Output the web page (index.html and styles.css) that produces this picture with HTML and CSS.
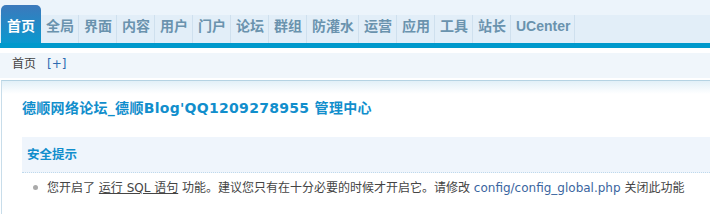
FILE: index.html
```html
<!DOCTYPE html>
<html lang="zh-CN">
<head>
<meta charset="utf-8">
<title>管理中心</title>
<link rel="stylesheet" href="styles.css">
</head>
<body>
<div class="header">
  <ul class="nav">
    <li class="on">首页</li>
    <li>全局</li>
    <li>界面</li>
    <li>内容</li>
    <li>用户</li>
    <li>门户</li>
    <li>论坛</li>
    <li>群组</li>
    <li>防灌水</li>
    <li>运营</li>
    <li>应用</li>
    <li>工具</li>
    <li>站长</li>
    <li>UCenter</li>
  </ul>
</div>
<div class="subnav"><span class="crumb">首页</span><a class="add">[+]</a></div>
<div class="main">
  <h3 class="title">德顺网络论坛_德顺Blog'QQ1209278955 管理中心</h3>
  <div class="box-head">安全提示</div>
  <ul class="tips">
    <li>您开启了 <a class="u">运行 SQL 语句</a> 功能。建议您只有在十分必要的时候才开启它。请修改 <span class="path">config/config_global.php</span> 关闭此功能</li>
  </ul>
</div>
</body>
</html>
```
FILE: styles.css
```css
html, body {
  margin: 0;
  padding: 0;
  background: #fff;
}
body {
  font-family: "DejaVu Sans", "Noto Sans CJK SC", sans-serif;
  font-size: 12px;
  color: #444;
}
.header {
  background: #ECF4FB;
  padding-top: 5px;
  border-bottom: 5px solid #0099CC;
}
.nav {
  list-style: none;
  margin: 0;
  padding: 0 0 0 1px;
  display: flex;
  align-items: flex-end;
  height: 38px;
  background: linear-gradient(#ECF4FB 0, #ECF4FB 10px, #E2EEF8 10px);
}
.nav li {
  box-sizing: border-box;
  height: 28px;
  padding: 0 4px 0 5px;
  border-right: 1px solid #CFE0EE;
  font: bold 14px/22px "Liberation Sans", "Noto Sans CJK SC", sans-serif;
  color: #6A93AE;
  white-space: nowrap;
}
.nav li.on {
  height: 38px;
  padding: 10px 6px 0;
  border-right: 0;
  border-radius: 5px 5px 0 0;
  background: linear-gradient(#3C79BC, #0A98CF);
  color: #fff;
}
.subnav {
  margin: 5px 0 2px;
  height: 25px;
  line-height: 23px;
  background: #F0F6FB;
  padding-left: 12px;
}
.crumb {
  color: #444;
}
.add {
  margin-left: 11px;
  color: #2D6BB1;
  font-family: "DejaVu Sans", sans-serif;
}
.main {
  margin-left: 1px;
  border-top: 1px solid #B5D3E3;
  border-left: 1px solid #C8DDEA;
  background: linear-gradient(#E2F0F8, #fff 13px) no-repeat;
  padding: 17px 0 16px 20px;
}
.title {
  margin: 0;
  font: bold 14px/20px "DejaVu Sans", "Noto Sans CJK SC", sans-serif;
  letter-spacing: 0.3px;
  color: #118ECC;
  white-space: nowrap;
}
.box-head {
  margin-top: 19px;
  height: 35px;
  line-height: 35px;
  padding-left: 5px;
  background: #EFF5FC;
  border-bottom: 1px dotted #BFD9EC;
  font-weight: bold;
  font-size: 12.5px;
  color: #118ECC;
}
.tips {
  list-style: none;
  margin: 5px 0 0;
  padding: 0;
}
.tips li {
  line-height: 20px;
  padding-left: 11px;
  white-space: nowrap;
}
.tips li::before {
  content: "";
  display: inline-block;
  width: 5px;
  height: 5px;
  border-radius: 50%;
  background: #AAA;
  margin-right: 9px;
  vertical-align: 2px;
}
.u {
  text-decoration: underline;
  color: #444;
}
.path {
  color: #3A65A0;
}
```
